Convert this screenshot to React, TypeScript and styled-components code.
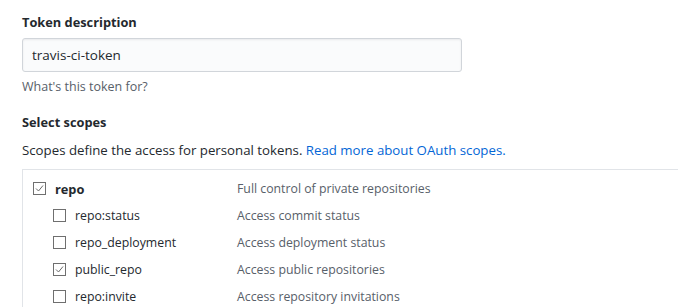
import React from "react";
import styled, { createGlobalStyle } from "styled-components";

const GlobalStyle = createGlobalStyle`
  html, body {
    margin: 0;
    padding: 0;
    background: #fff;
    overflow: hidden;
  }
  body {
    font-family: "Open Sans", "Noto Sans", "Liberation Sans", sans-serif;
    font-size: 13.25px;
    color: #24292e;
  }
`;

interface Scope {
  name: string;
  description: string;
  checked: boolean;
  child?: boolean;
}

const scopes: Scope[] = [
  { name: "repo", description: "Full control of private repositories", checked: true },
  { name: "repo:status", description: "Access commit status", checked: false, child: true },
  { name: "repo_deployment", description: "Access deployment status", checked: false, child: true },
  { name: "public_repo", description: "Access public repositories", checked: true, child: true },
  { name: "repo:invite", description: "Access repository invitations", checked: false, child: true },
];

const Checkbox = ({ checked }: { checked: boolean }) => (
  <Box>
    {checked && (
      <svg width="11" height="11" viewBox="0 0 11 11">
        <path d="M2 5.5 L4.5 8 L9 2.5" fill="none" stroke="#6a6a6a" strokeWidth="1" />
      </svg>
    )}
  </Box>
);

const App = () => {
  return (
    <Page>
      <GlobalStyle />
      <Label>Token description</Label>
      <Input defaultValue="travis-ci-token" />
      <Note>What's this token for?</Note>

      <Heading>Select scopes</Heading>
      <Lead>
        Scopes define the access for personal tokens.{" "}
        <a href="#">Read more about OAuth scopes.</a>
      </Lead>

      <ScopeList>
        {scopes.map((scope) => (
          <Row key={scope.name}>
            <Name $child={scope.child} $bold={!scope.child}>
              <Checkbox checked={scope.checked} />
              {scope.name}
            </Name>
            <Desc>{scope.description}</Desc>
          </Row>
        ))}
      </ScopeList>
    </Page>
  );
};

const Page = styled.div`
  padding: 12px 0 0 22px;
  width: 656px;
`;

const Label = styled.div`
  font-weight: 700;
  font-size: 12.8px;
  line-height: 20px;
  height: 20px;
`;

const Input = styled.input`
  display: block;
  box-sizing: border-box;
  margin-top: 6px;
  width: 440px;
  height: 34px;
  padding: 0 9px;
  font-family: inherit;
  font-size: 13.5px;
  color: #24292e;
  background: #fafbfc;
  border: 1px solid #d1d5da;
  border-radius: 3px;
  box-shadow: inset 0 1px 2px rgba(27, 31, 35, 0.075);
  outline: none;
`;

const Note = styled.p`
  margin: 5px 0 0;
  font-size: 12.5px;
  line-height: 20px;
  color: #586069;
`;

const Heading = styled.h3`
  margin: 15px 0 0;
  font-size: 12.8px;
  font-weight: 700;
  line-height: 20px;
`;

const Lead = styled.p`
  margin: 8px 0 0;
  line-height: 20px;
  a {
    color: #0366d6;
    text-decoration: none;
  }
`;

const ScopeList = styled.div`
  margin-top: 9px;
  border-top: 1px solid #e1e4e8;
  border-left: 1px solid #e1e4e8;
  padding: 5px 0 0 10px;
  font-size: 12.3px;
`;

const Row = styled.div`
  display: flex;
  align-items: center;
  height: 27px;
`;

const Name = styled.label<{ $child?: boolean; $bold?: boolean }>`
  display: flex;
  align-items: center;
  gap: 9px;
  width: 204px;
  padding-left: ${(p) => (p.$child ? "20px" : "0")};
  box-sizing: border-box;
  font-weight: ${(p) => (p.$bold ? 700 : 400)};
  font-size: ${(p) => (p.$bold ? "12.8px" : "12.3px")};
  color: #24292e;
`;

const Box = styled.span`
  display: inline-flex;
  align-items: center;
  justify-content: center;
  box-sizing: border-box;
  width: 13px;
  height: 13px;
  border: 1px solid #6f6f6f;
  background: #fff;
  flex: none;
`;

const Desc = styled.span`
  color: #586069;
`;

export default App;
